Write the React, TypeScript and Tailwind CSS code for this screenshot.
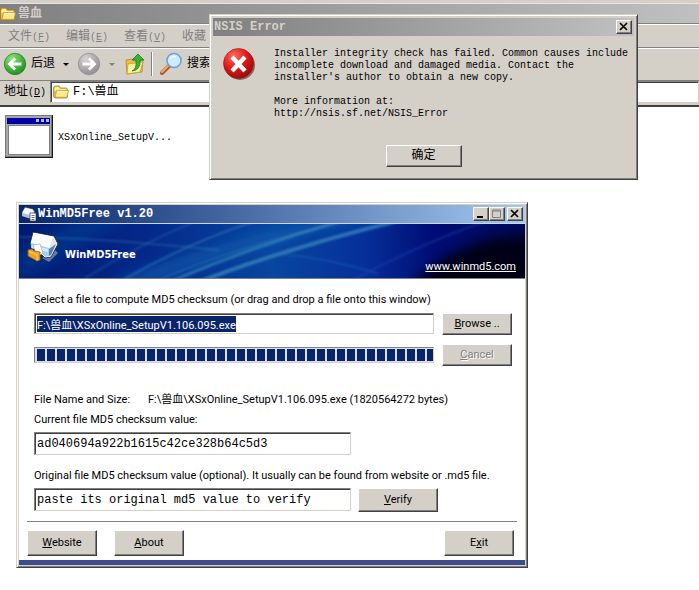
import React, { useEffect, useRef } from 'react';

const RAISED = 'border border-t-white border-l-white border-r-[#404040] border-b-[#404040] bg-[#d4d0c8] shadow-[inset_-1px_-1px_0_#808080]';
const SUNKEN = 'border border-t-[#808080] border-l-[#808080] border-r-[#d4d0c8] border-b-[#d4d0c8] bg-white shadow-[inset_1px_1px_0_#404040]';
const MONO = "font-['Liberation_Mono','Noto_Sans_CJK_SC',monospace]";

const FolderIcon: React.FC = () => (
    <svg className="w-4 h-4 shrink-0" viewBox="0 0 16 16">
        <path d="M.500 4Q.500 2 2.500 2H6l1.500 2H13q1.500 0 1.500 2v6.500q0 1.500-1.500 1.500H2.500Q.500 14 .500 12z" fill="#eec04a" stroke="#a8801c" strokeWidth=".8" />
        <path d="M1.500 4.500Q1.500 3 3 3h2.600L7 5h6.500v2h-12z" fill="#fff2a8" />
        <path d="M3.500 6.500H15.500L14 13.300H2z" fill="#ffe98e" stroke="#b88d20" strokeWidth=".7" />
        <path d="M4.200 7.500h10" stroke="#fffbd8" />
    </svg>
);

const RoundArrow: React.FC<{ id: string; light: string; dark: string; back?: boolean }> = ({ id, light, dark, back }) => (
    <svg className="w-6 h-6" viewBox="0 0 24 24">
        <defs>
            <radialGradient id={id} cx=".35" cy=".25" r=".8">
                <stop offset="0" stopColor={light} />
                <stop offset="1" stopColor={dark} />
            </radialGradient>
        </defs>
        <circle cx="12" cy="12" r="10.700" fill={`url(#${id})`} stroke={dark} strokeWidth=".8" />
        <path
            d={back ? 'M18.500 12H7M12 6.500L6.500 12l5.500 5.500' : 'M5.500 12H17M12 6.500l5.500 5.500-5.500 5.500'}
            fill="none"
            stroke="#fff"
            strokeWidth="2.800"
        />
    </svg>
);

const UpFolderIcon: React.FC = () => (
    <svg className="w-6 h-6" viewBox="0 0 24 24">
        <path d="M3 8l6-1 2 2 9-1-1 12-15 2z" fill="#e9bd45" stroke="#b58a1c" strokeWidth=".8" />
        <path d="M5 12l15-2-3 10-13 2z" fill="#fff0a0" stroke="#c69a2a" strokeWidth=".8" />
        <path d="M9 19q5-2 4-11H9l6-6 6 6h-4q1 10-8 11z" fill="#35b534" stroke="#1b7a20" strokeWidth=".8" />
    </svg>
);

const SearchIcon: React.FC = () => (
    <svg className="w-6 h-6" viewBox="0 0 24 24">
        <path d="M10 14L3 21" stroke="#a85a2c" strokeWidth="4" strokeLinecap="round" />
        <path d="M9 14L3 20" stroke="#f4a868" strokeWidth="2" strokeLinecap="round" />
        <circle cx="15" cy="8.500" r="7" fill="#cdeaff" stroke="#6f9fd8" strokeWidth="1.600" />
        <path d="M10.500 8q.5-4 4.500-4.500 2 0 2 1.500-5 0-6.500 3z" fill="#fff" />
    </svg>
);

const ProgramIcon: React.FC = () => (
    <svg className="w-12 h-11 shrink-0" viewBox="0 0 48 44" shapeRendering="crispEdges">
        <path d="M0 0h48v43H0z" fill="#181818" />
        <path d="M0 0h47v42H0z" fill="#787878" />
        <path d="M1 1h45v40H1z" fill="#a8a8a8" />
        <path d="M2 3h43v6H2z" fill="#0000a8" />
        <path d="M31 4h3v3h-3zM36 4h3v3h-3zM41 4h3v3h-3z" fill="#b8b8c8" />
        <path d="M3 10h42v30H3z" fill="#808080" />
        <path d="M4 11h40v28H4z" fill="#fff" />
    </svg>
);

const ErrorIcon: React.FC = () => (
    <svg className="w-8 h-8 shrink-0" viewBox="0 0 32 32">
        <defs>
            <radialGradient id="err" cx=".35" cy=".25" r=".85">
                <stop offset="0" stopColor="#ff6a5c" />
                <stop offset=".5" stopColor="#e01818" />
                <stop offset="1" stopColor="#8c0808" />
            </radialGradient>
        </defs>
        <circle cx="17" cy="17" r="15" fill="#5c3c38" opacity=".7" />
        <circle cx="15.500" cy="15.500" r="15" fill="url(#err)" stroke="#a01010" strokeWidth=".6" />
        <path d="M9 9l13 14M22 9L9 23" stroke="#fff" strokeWidth="4.400" />
    </svg>
);

const PackageIcon: React.FC<{ className: string }> = ({ className }) => (
    <svg className={className} viewBox="0 0 32 32">
        <path d="M15 27l7 4 9-9-3-3z" fill="#7b8fb8" opacity=".8" />
        <path d="M6 1L27 5l4 8-7 13-6 1L3 13z" fill="#fff" stroke="#101830" strokeWidth=".8" />
        <path d="M7 2l19 4-4 11L4 12z" fill="#fbfcfd" />
        <path d="M4 12l18 5v8l-3 1-9-7-6-2z" fill="#a5cfe8" />
        <path d="M5 14l16 4v3L5 17z" fill="#d6ecf8" />
        <path d="M22 17l4-11 4 7-6 12-2 1z" fill="#dfe5ec" />
        <path d="M22 18l7-5-5 11-2 1z" fill="#5f7fa8" />
        <path d="M6 14l7-1 3 9-6 4z" fill="#fff" stroke="#889" strokeWidth=".5" />
        <path d="M1 19l4-1 2 2 6 1v8l-3 1-9-5z" fill="#f2a123" stroke="#9c5a10" strokeWidth=".8" />
        <path d="M2 20.500l8 3v6" fill="none" stroke="#ffd27c" />
    </svg>
);

const TitleIcon: React.FC = () => (
    <svg className="w-4 h-4 shrink-0" viewBox="0 0 16 16">
        <path d="M1 6l3-5 8 2 2 3-3 6-10-2z" fill="#f4f7fa" stroke="#20304c" strokeWidth=".7" />
        <path d="M1 7l9 2 3-4v5l-3 3-9-3z" fill="#a9c5de" />
        <path d="M9 7h6v8H9z" fill="#fff" stroke="#333" strokeWidth=".7" />
        <path d="M10.500 9.500h3M10.500 11.500h3M10.500 13.500h3" stroke="#68748c" />
    </svg>
);

const DownArrow: React.FC<{ color: string }> = ({ color }) => (
    <svg className="w-[6px] h-[3px]" viewBox="0 0 6 3">
        <path d="M0 0h6L3 3z" fill={color} />
    </svg>
);

const CaptionButton: React.FC<{ label: string; children: React.ReactNode }> = ({ label, children }) => (
    <button aria-label={label} className={`w-4 h-[14px] flex items-center justify-center ${RAISED}`}>
        <svg className="w-3 h-[10px]" viewBox="0 0 12 10">{children}</svg>
    </button>
);

const CloseGlyph = () => <path d="M2 1l7 7M9 1L2 8" stroke="#000" strokeWidth="1.700" />;

const Button: React.FC<{ className: string; disabled?: boolean; children: React.ReactNode }> = ({ className, disabled, children }) => (
    <button disabled={disabled} className={`shrink-0 text-center ${RAISED} ${className} ${disabled ? 'text-[#808080] [text-shadow:1px_1px_0_#fff]' : 'text-black'}`}>
        {children}
    </button>
);

const menus = [
    { name: '文件', hotkey: 'F' },
    { name: '编辑', hotkey: 'E' },
    { name: '查看', hotkey: 'V' },
    { name: '收藏' },
];

const Explorer = () => (
    <section className={`text-[12px] ${MONO}`}>
        <div className="h-1 bg-[#d4d0c8] border-b border-b-[#e8e6e2]" />
        <header className="h-[19px] flex items-center gap-[2px] bg-linear-to-r from-[#808080] to-[#c0c0c0] text-[#d4d0c8] font-bold">
            <FolderIcon />
            <h1 className="pt-px">兽血</h1>
        </header>
        <nav className="h-6 pl-2 pt-[3px] flex items-center gap-4 bg-[#d4d0c8] border-t border-t-[#808080] shadow-[inset_0_1px_0_#fff] text-[#808080]">
            {menus.map(({ name, hotkey }) => (
                <button key={name} className="whitespace-nowrap w-[42px] text-left">
                    {name}{hotkey && <span className="text-[10px]">(<u>{hotkey}</u>)</span>}
                </button>
            ))}
        </nav>
        <div className="h-[33px] pl-[3px] flex items-center bg-[#d4d0c8] border-t border-t-[#808080] shadow-[inset_0_1px_0_#fff]">
            <button className="flex items-center gap-1"><RoundArrow id="back" light="#8fe07c" dark="#1d8c1d" back />后退</button>
            <button aria-label="后退列表" className="px-2"><DownArrow color="#000" /></button>
            <button aria-label="前进"><RoundArrow id="fwd" light="#d4d4d4" dark="#8e8e8e" /></button>
            <button aria-label="前进列表" className="px-2"><DownArrow color="#808080" /></button>
            <button aria-label="向上" className="pr-1"><UpFolderIcon /></button>
            <span className="h-6 w-[2px] mr-[6px] border-l border-l-[#808080] bg-white" />
            <button className="flex items-center gap-1"><SearchIcon />搜索</button>
        </div>
        <div className="h-[27px] flex items-start bg-[#d4d0c8] border-t border-t-[#808080] border-b-2 border-b-[#404040]">
            <label htmlFor="address" className="w-[50px] pl-1 leading-[22px] whitespace-nowrap">
                地址<span className="text-[10px]">(<u>D</u>)</span>
            </label>
            <div className={`grow h-[22px] pl-[2px] flex items-center gap-1 ${SUNKEN}`}>
                <FolderIcon />
                <input id="address" defaultValue="F:\兽血" className="grow outline-none" />
            </div>
        </div>
        <div className="pt-2 pl-[5px] flex items-center gap-[5px]">
            <ProgramIcon />
            <span className="text-[10px]">XSxOnline_SetupV...</span>
        </div>
    </section>
);

const ErrorDialog = () => (
    <section
        role="dialog"
        aria-label="NSIS Error"
        className={`absolute left-[209px] top-[14px] w-[429px] p-[3px] pb-3 bg-[#d4d0c8] border border-t-[#d4d0c8] border-l-[#d4d0c8] border-r-[#404040] border-b-[#404040] shadow-[inset_1px_1px_0_#fff,inset_-1px_-1px_0_#808080] ${MONO}`}
    >
        <header className="h-[18px] pr-[2px] pl-px flex items-center justify-between bg-linear-to-r from-[#808080] to-[#c0c0c0]">
            <h2 className="text-[12px] font-bold text-[#d4d0c8]">NSIS Error</h2>
            <CaptionButton label="Close"><CloseGlyph /></CaptionButton>
        </header>
        <div className="pt-3 pl-[10px] flex gap-[19px]">
            <ErrorIcon />
            <div className="text-[10px] leading-[12px] whitespace-pre">
                <p>Installer integrity check has failed. Common causes include</p>
                <p>incomplete download and damaged media. Contact the</p>
                <p>installer's author to obtain a new copy.</p>
                <p className="pt-3">More information at:</p>
                <p>http://nsis.sf.net/NSIS_Error</p>
            </div>
        </div>
        <div className="pt-[25px] flex justify-center">
            <Button className="w-[76px] h-[22px] text-[12px] leading-[20px]">确定</Button>
        </div>
    </section>
);

const Banner = () => (
    <div className="relative h-14 border-t border-t-[#c8d8f0] border-b border-b-[#808080] bg-[#02187a] overflow-hidden">
        <svg className="absolute inset-0 w-full h-full" viewBox="0 0 506 54" preserveAspectRatio="none">
            <defs>
                <linearGradient id="sky" x1="0" y1="0" x2="1" y2="0">
                    <stop offset="0" stopColor="#001a70" />
                    <stop offset=".25" stopColor="#04288a" />
                    <stop offset=".5" stopColor="#0846a0" />
                    <stop offset=".68" stopColor="#06309a" />
                    <stop offset=".82" stopColor="#000c74" />
                    <stop offset="1" stopColor="#000858" />
                </linearGradient>
                <filter id="soft" x="-20%" y="-40%" width="140%" height="180%"><feGaussianBlur stdDeviation="1" /></filter>
                <filter id="haze" x="-50%" y="-100%" width="200%" height="300%"><feGaussianBlur stdDeviation="6" /></filter>
            </defs>
            <path d="M0 0h506v54H0z" fill="url(#sky)" />
            <g filter="url(#haze)">
                <path d="M130 60Q240 10 390-6H320Q200 14 90 60z" fill="#1668b4" opacity=".6" />
                <path d="M0 60Q50 26 110-6H60L0 24z" fill="#0848a0" opacity=".4" />
            </g>
            <g filter="url(#soft)" fill="none" stroke="#4090c0">
                <path d="M0 13Q60 14 110 18T200 26" strokeWidth="2" opacity=".3" />
                <path d="M60 58Q120 20 180-4" strokeWidth="2" opacity=".25" />
                <path d="M100 58Q170 18 240-4" strokeWidth="2" opacity=".45" />
                <path d="M130 60Q220 22 330-4" strokeWidth="2" opacity=".35" />
                <path d="M150 58Q235 22 325-4" strokeWidth="3" opacity=".6" />
                <path d="M175 60Q260 26 390-6" strokeWidth="4" opacity=".65" />
                <path d="M260 30Q310 34 360 50" stroke="#2878c0" strokeWidth="2" opacity=".3" />
                <path d="M330 58Q400 20 470-4" stroke="#1a48b8" strokeWidth="3" opacity=".3" />
            </g>
            <path d="M390 66Q415 36 450 22Q480 10 520 12V66z" fill="#000012" filter="url(#haze)" />
        </svg>
        <div className="relative h-full pl-2 pr-[9px] flex items-center text-white">
            <PackageIcon className="w-8 h-8 mb-2" />
            <h3 className="grow pl-[6px] pt-2 font-bold font-['DejaVu_Sans_Condensed',sans-serif]">WinMD5Free</h3>
            <a href="#winmd5" className="self-end pb-[3px] underline">www.winmd5.com</a>
        </div>
    </div>
);

const Md5Window = () => {
    const fileRef = useRef<HTMLInputElement>(null);

    useEffect(() => {
        fileRef.current?.focus();
        fileRef.current?.select();
    }, []);

    return (
        <section className="absolute left-[16px] top-[202px] w-[512px] p-[2px] bg-[#d4d0c8] border border-t-[#d4d0c8] border-l-[#d4d0c8] border-r-[#404040] border-b-[#404040] shadow-[inset_1px_1px_0_#fff,inset_-1px_-1px_0_#808080] font-[Roboto,'Noto_Sans_CJK_SC',sans-serif] text-[11px]">
            <header className="h-[18px] px-[2px] flex items-center bg-linear-to-r from-[#0a246a] to-[#a6caf0]">
                <TitleIcon />
                <h2 className={`grow pl-px text-[12px] font-bold text-white ${MONO}`}>WinMD5Free v1.20</h2>
                <CaptionButton label="Minimize"><path d="M2 7h6v2H2z" /></CaptionButton>
                <CaptionButton label="Maximize"><path d="M1.500 1h8v7.500h-8zM1.500 2h8" fill="none" stroke="#808080" /></CaptionButton>
                <span className="w-[2px]" />
                <CaptionButton label="Close"><CloseGlyph /></CaptionButton>
            </header>
            <Banner />
            <div className="bg-white pt-[13px] px-2 pb-1 leading-4">
                <div className="pl-[7px]">
                    <label htmlFor="file" className="block">Select a file to compute MD5 checksum (or drag and drop a file onto this window)</label>
                    <div className="mt-[5px] flex gap-2 items-start">
                        <input
                            id="file"
                            ref={fileRef}
                            defaultValue="F:\兽血\XSxOnline_SetupV1.106.095.exe"
                            className={`w-[400px] h-[21px] px-[2px] outline-none selection:bg-[#0a246a] selection:text-white ${SUNKEN}`}
                        />
                        <Button className="w-[70px] h-[22px]"><u>B</u>rowse ..</Button>
                    </div>
                    <div className="mt-[9px] flex gap-2 items-center">
                        <div
                            role="progressbar"
                            aria-label="Checksum progress"
                            aria-valuenow={100}
                            className="w-[400px] h-4 p-px pl-[2px] flex gap-[2px] overflow-hidden bg-[#d8e0f0] border border-t-[#808080] border-l-[#808080] border-r-[#d4d0c8] border-b-[#d4d0c8]"
                        >
                            {Array.from({ length: 40 }, (_, i) => (
                                <span key={i} className="w-2 shrink-0 bg-[#0a246a]" />
                            ))}
                        </div>
                        <Button className="w-[70px] h-[22px]" disabled><u>C</u>ancel</Button>
                    </div>
                    <p className="mt-[26px] flex whitespace-nowrap">
                        <span className="w-[114px]">File Name and Size:</span>
                        <span>F:\兽血\XSxOnline_SetupV1.106.095.exe (1820564272 bytes)</span>
                    </p>
                    <label htmlFor="current" className="mt-1 block">Current file MD5 checksum value:</label>
                    <input id="current" readOnly value="ad040694a922b1615c42ce328b64c5d3" className={`mt-1 block w-[317px] h-[23px] px-[2px] outline-none text-[12px] ${MONO} ${SUNKEN}`} />
                    <label htmlFor="original" className="mt-[13px] block">Original file MD5 checksum value (optional). It usually can be found from website or .md5 file.</label>
                    <div className="mt-1 flex gap-[7px]">
                        <input id="original" defaultValue="paste its original md5 value to verify" className={`w-[317px] h-[23px] px-[2px] outline-none text-[12px] ${MONO} ${SUNKEN}`} />
                        <Button className="w-20 h-6"><u>V</u>erify</Button>
                    </div>
                </div>
                <div className="mt-[9px] pt-2 pr-[3px] flex gap-[17px] border-t border-t-[#808080]">
                    <Button className="w-[70px] h-[26px]"><u>W</u>ebsite</Button>
                    <Button className="w-[70px] h-[26px]"><u>A</u>bout</Button>
                    <span className="grow" />
                    <Button className="w-[70px] h-[26px]">E<u>x</u>it</Button>
                </div>
            </div>
            <div className="h-[5px] bg-[#3c4c8c]" />
        </section>
    );
};

const App: React.FC = () => (
    <main className="relative min-h-screen bg-white text-black overflow-hidden">
        <Explorer />
        <ErrorDialog />
        <Md5Window />
    </main>
);

export default App;
